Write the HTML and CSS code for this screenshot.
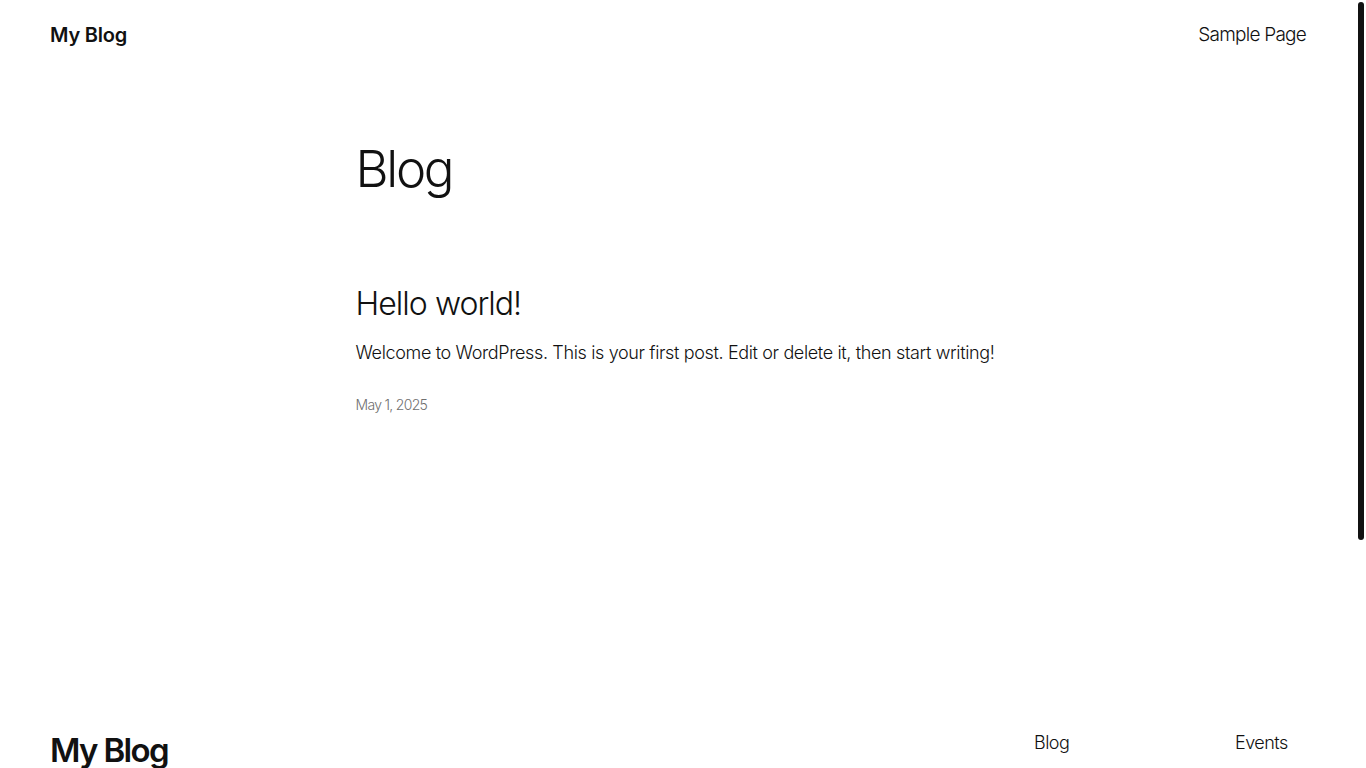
FILE: index.html
```html
<!DOCTYPE html>
<html lang="en">
<head>
<meta charset="utf-8">
<title>My Blog</title>
<link rel="stylesheet" href="styles.css">
</head>
<body>
<div class="page">
<header class="site-header">
  <a class="site-title" href="#">My Blog</a>
  <nav class="header-nav"><a href="#">Sample Page</a></nav>
</header>
<main class="site-main">
  <div class="content">
    <h1 class="page-title">Blog</h1>
    <article class="post">
      <h2 class="post-title"><a href="#">Hello world!</a></h2>
      <p class="post-excerpt">Welcome to WordPress. This is your first post. Edit or delete it, then start writing!</p>
      <div class="post-date">May 1, 2025</div>
    </article>
  </div>
</main>
<footer class="site-footer">
  <div class="footer-top">
    <div class="footer-brand">
      <a class="footer-title" href="#">My Blog</a>
    </div>
    <div class="footer-navs">
      <nav class="footer-col">
        <a href="#">Blog</a>
        <a href="#">About</a>
        <a href="#">FAQs</a>
        <a href="#">Authors</a>
      </nav>
      <nav class="footer-col">
        <a href="#">Events</a>
        <a href="#">Shop</a>
        <a href="#">Patterns</a>
        <a href="#">Themes</a>
      </nav>
    </div>
  </div>
  <div class="footer-bottom">
    <span>Twenty Twenty-Five</span>
    <span>Designed with <a href="#">WordPress</a></span>
  </div>
</footer>
</div>
<div class="scroll-thumb" aria-hidden="true"></div>
</body>
</html>
```
FILE: styles.css
```css
html {
  background: #fff;
}
body {
  margin: 0;
  font-family: Inter, "Noto Sans", sans-serif;
  font-weight: 300;
  color: #111111;
  background: #fff;
}
.page {
  margin-right: 10px;
}
.scroll-thumb {
  position: fixed;
  top: 2px;
  right: 2px;
  width: 6px;
  height: 538px;
  background: #111;
  border-radius: 3px;
}
a {
  color: inherit;
  text-decoration: none;
}
.site-header {
  display: flex;
  justify-content: space-between;
  align-items: center;
  padding: 20px 50px;
  line-height: 30px;
}
.site-title {
  font-size: 20px;
  font-weight: 600;
  letter-spacing: -0.01em;
}
.header-nav a {
  font-size: 19px;
  font-weight: 300;
  letter-spacing: -0.04em;
}
.site-main {
  padding-top: 70px;
  padding-bottom: 315px;
}
.content {
  width: 645px;
  margin: 0 auto;
}
.page-title {
  margin: 0;
  font-size: 51px;
  font-weight: 300;
  line-height: 57px;
  letter-spacing: -0.045em;
}
.post {
  margin-top: 88px;
}
.post-title {
  margin: 0;
  font-size: 32px;
  font-weight: 300;
  line-height: 38px;
  letter-spacing: -0.03em;
}
.post-excerpt {
  margin: 17px 0 0;
  font-size: 18px;
  line-height: 25px;
  letter-spacing: -0.02em;
  white-space: nowrap;
}
.post-date {
  margin-top: 30px;
  font-size: 14px;
  line-height: 20px;
  color: #6f6f6f;
  letter-spacing: -0.05em;
}
.site-footer {
  padding: 0 50px 60px;
}
.footer-top {
  display: flex;
  justify-content: space-between;
  align-items: flex-start;
}
.footer-title {
  font-size: 33px;
  font-weight: 600;
  line-height: 40px;
  letter-spacing: -0.05em;
}
.footer-navs {
  display: flex;
  gap: 130px;
}
.footer-col {
  display: flex;
  flex-direction: column;
  gap: 10px;
  width: 71px;
}
.footer-col a {
  font-size: 18px;
  line-height: 26px;
  letter-spacing: -0.03em;
}
.footer-bottom {
  display: flex;
  justify-content: space-between;
  margin-top: 80px;
  font-size: 14px;
  color: #111;
}
.footer-bottom a {
  text-decoration: underline;
}
```
